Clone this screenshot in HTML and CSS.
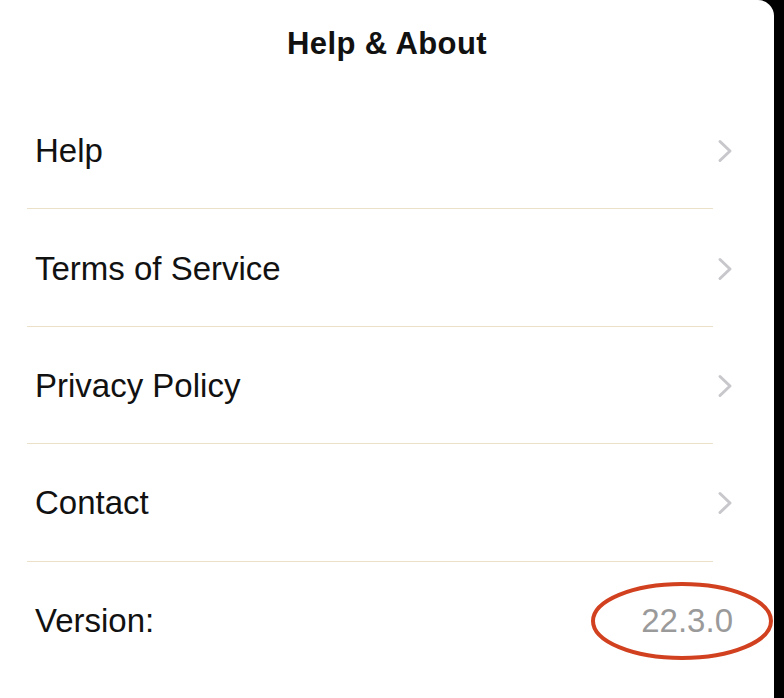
FILE: index.html
```html
<!DOCTYPE html>
<html lang="en">
<head>
<meta charset="utf-8">
<title>Help &amp; About</title>
<link rel="stylesheet" href="styles.css">
</head>
<body>
<div class="panel">
  <header class="header">Help &amp; About</header>
  <ul class="list">
    <li class="item"><div class="row"><span class="label">Help</span><svg class="chev" viewBox="0 0 16 24" width="16" height="24"><path d="M3 2.5 L13 12 L3 21.5" fill="none" stroke="#c8c8cc" stroke-width="3" stroke-linecap="round" stroke-linejoin="round"/></svg></div></li>
    <li class="item"><div class="row"><span class="label">Terms of Service</span><svg class="chev" viewBox="0 0 16 24" width="16" height="24"><path d="M3 2.5 L13 12 L3 21.5" fill="none" stroke="#c8c8cc" stroke-width="3" stroke-linecap="round" stroke-linejoin="round"/></svg></div></li>
    <li class="item"><div class="row"><span class="label">Privacy Policy</span><svg class="chev" viewBox="0 0 16 24" width="16" height="24"><path d="M3 2.5 L13 12 L3 21.5" fill="none" stroke="#c8c8cc" stroke-width="3" stroke-linecap="round" stroke-linejoin="round"/></svg></div></li>
    <li class="item"><div class="row"><span class="label">Contact</span><svg class="chev" viewBox="0 0 16 24" width="16" height="24"><path d="M3 2.5 L13 12 L3 21.5" fill="none" stroke="#c8c8cc" stroke-width="3" stroke-linecap="round" stroke-linejoin="round"/></svg></div></li>
    <li class="item last"><div class="row"><span class="label">Version:</span><span class="version">22.3.0<svg class="ring" viewBox="0 0 182 78" width="182" height="78"><ellipse cx="91" cy="39" rx="89" ry="37" fill="none" stroke="#d2411f" stroke-width="4"/></svg></span></div></li>
  </ul>
</div>
</body>
</html>
```

FILE: styles.css
```css
html, body {
  margin: 0;
  padding: 0;
  background: #000;
}
body {
  width: 784px;
  height: 698px;
  overflow: hidden;
  font-family: "Liberation Sans", Arial, sans-serif;
  color: #111;
}
.panel {
  width: 774px;
  height: 698px;
  background: #fff;
  border-top-right-radius: 16px;
}
.header {
  height: 92px;
  display: flex;
  align-items: center;
  justify-content: center;
  font-size: 31px;
  font-weight: 600;
  letter-spacing: 0.4px;
  color: #111;
  padding-bottom: 4px;
  box-sizing: border-box;
}
.list {
  list-style: none;
  margin: 0;
  padding: 0;
}
.item {
  margin: 0 61px 0 27px;
  height: 117.4px;
  border-bottom: 1px solid #ebe1c9;
  box-sizing: border-box;
}
.item.last {
  border-bottom: none;
}
.row {
  height: 100%;
  display: flex;
  align-items: center;
  justify-content: space-between;
  padding-left: 8px;
  margin-right: -20px;
  padding-top: 2px;
  box-sizing: border-box;
}
.label {
  font-size: 33px;
  color: #111;
}
.chev {
  display: block;
}
.version {
  position: relative;
  font-size: 33px;
  color: #9a9a9a;
}
.ring {
  position: absolute;
  left: -50px;
  top: -20px;
  pointer-events: none;
}
```
